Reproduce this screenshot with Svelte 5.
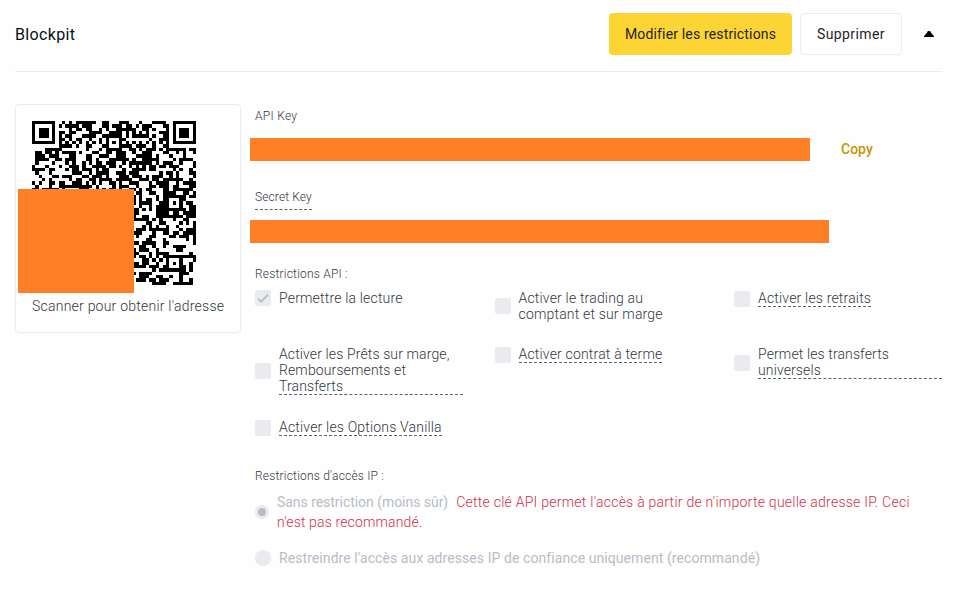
<script>
  const size = 49;
  const centers = [6, 24, 42];

  // Concentric square used by both finder and alignment patterns.
  function ring(x, y, cx, cy, radius) {
    const d = Math.max(Math.abs(x - cx), Math.abs(y - cy));
    if (d > radius) return null;
    if (radius === 4) return d !== 4 && d !== 2;
    return d !== 1;
  }

  function buildCode() {
    let seed = 73421;
    let path = '';
    for (let y = 0; y < size; y++) {
      for (let x = 0; x < size; x++) {
        seed = (seed * 48271) % 2147483647;
        let dark = seed / 2147483647 < 0.54;
        if (x === 6 || y === 6) dark = (x + y) % 2 === 0;
        for (const cx of centers) {
          for (const cy of centers) {
            const v = ring(x, y, cx, cy, 2);
            if (v !== null) dark = v;
          }
        }
        for (const [cx, cy] of [[3, 3], [45, 3], [3, 45]]) {
          const v = ring(x, y, cx, cy, 4);
          if (v !== null) dark = v;
        }
        if (dark) path += `M${x} ${y}h1v1h-1z`;
      }
    }
    return path;
  }

  const code = buildCode();

  const permissions = [
    { lines: ['Permettre la lecture'], checked: true },
    { lines: ['Activer le trading au', 'comptant et sur marge'] },
    { lines: ['Activer les retraits'], hint: true },
    { lines: ['Activer les Prêts sur marge,', 'Remboursements et', 'Transferts'], hint: true, full: true },
    { lines: ['Activer contrat à terme'], hint: true },
    { lines: ['Permet les transferts', 'universels'], hint: true, full: true },
    { lines: ['Activer les Options Vanilla'], hint: true }
  ];
</script>

<main>
  <header>
    <h1>Blockpit</h1>
    <div class="actions">
      <button class="primary">Modifier les restrictions</button>
      <button class="secondary">Supprimer</button>
      <svg class="caret" width="10" height="8" viewBox="0 0 10 8"><path d="M0 6.2 4.1 1.2Q5 .3 5.9 1.2L10 6.2V7H0z" /></svg>
    </div>
  </header>

  <div class="body">
    <aside>
      <div class="qr">
        <svg width="164" height="164" viewBox="0 0 49 49"><path d={code} /></svg>
        <div class="cover"></div>
      </div>
      <p>Scanner pour obtenir l'adresse</p>
    </aside>

    <section>
      <div class="label api">API Key</div>
      <div class="keyrow">
        <div class="key public"></div>
        <span class="copy">Copy</span>
      </div>
      <div class="label secret"><span>Secret Key</span></div>
      <div class="key private"></div>

      <div class="label restr">Restrictions API :</div>
      <div class="grid">
        {#each permissions as p}
          <div class="item">
            <span class="box">
              {#if p.checked}
                <svg width="16" height="16" viewBox="0 0 16 16"><path d="M3 8.6 6.1 11.6 13 4.6" /></svg>
              {/if}
            </span>
            <span class="text" class:hint={p.hint} class:full={p.full}>
              {#each p.lines as line}<span class="line">{line}</span>{/each}
            </span>
          </div>
        {/each}
      </div>

      <div class="label ip">Restrictions d'accès IP :</div>
      <div class="option first">
        <span class="radio on"></span>
        <div>
          <span class="muted">Sans restriction (moins sûr)</span><span class="warn">Cette clé API permet l'accès à partir de n'importe quelle adresse IP. Ceci</span>
          <br /><span class="warn end">n'est pas recommandé.</span>
        </div>
      </div>
      <div class="option second">
        <span class="radio"></span>
        <span>Restreindre l'accès aux adresses IP de confiance uniquement (recommandé)</span>
      </div>
    </section>
  </div>
</main>

<style>
  :global(body) { background: #fefefe; }
  main {
    box-sizing: border-box;
    width: 956px;
    height: 596px;
    padding: 0 14px 0 15px;
    overflow: hidden;
    font-family: Roboto, "Liberation Sans", sans-serif;
    font-size: 14px;
    font-weight: 300;
    color: #33383f;
    white-space: nowrap;
  }
  header {
    display: flex;
    align-items: center;
    justify-content: space-between;
    box-sizing: border-box;
    height: 72px;
    padding-bottom: 3px;
    border-bottom: 1px solid #eaecef;
  }
  h1 { margin: 0; font-size: 16px; font-weight: 400; color: #0b0e11; letter-spacing: 0.35px; }
  .actions { display: flex; align-items: center; }
  button {
    box-sizing: border-box;
    height: 42px;
    padding: 0;
    border: 0;
    border-radius: 4px;
    font: 400 14px Roboto, "Liberation Sans", sans-serif;
    color: #1e2329;
  }
  .primary { width: 183px; background: #fcd535; letter-spacing: 0.16px; }
  .secondary { width: 102px; margin-left: 8px; border: 1px solid #eaecef; background: #fff; letter-spacing: 0.4px; }
  .caret { margin: 0 8px 0 22px; fill: #000; }
  .body { display: flex; align-items: flex-start; padding-top: 32px; }
  aside {
    box-sizing: border-box;
    width: 226px;
    height: 229px;
    padding: 16px;
    border: 1px solid #eaecef;
    border-radius: 4px;
  }
  .qr { position: relative; width: 164px; height: 164px; }
  .qr svg { display: block; shape-rendering: crispEdges; }
  .cover { position: absolute; left: -14px; top: 68px; width: 116px; height: 104px; background: #ff7f27; }
  aside p { margin: 13px 0 0; line-height: 16px; letter-spacing: 0.23px; }
  section { width: 687px; margin-left: 14px; }
  .label { font-size: 12px; line-height: 16px; letter-spacing: 0.2px; }
  .api { margin-top: 4px; letter-spacing: 0.3px; }
  .keyrow { display: flex; align-items: center; height: 23px; margin-top: 14px; }
  .key { height: 23px; margin-left: -5px; background: #ff7f27; }
  .public { width: 560px; }
  .private { width: 579px; margin-top: 10px; }
  .copy { margin: -1px 0 0 31px; font-weight: 500; color: #c99400; }
  .secret { margin-top: 28px; letter-spacing: 0.12px; }
  .secret span { display: inline-block; height: 20px; border-bottom: 1px dashed #5e636b; }
  .restr { margin-top: 23px; }
  .grid {
    display: grid;
    grid-template-columns: repeat(3, 208px);
    column-gap: 31.5px;
    row-gap: 24px;
    align-items: start;
    margin-top: 8px;
  }
  .item { display: flex; align-items: center; }
  .box { flex: none; width: 16px; height: 16px; margin-right: 8px; border-radius: 2px; background: #eaebef; }
  .box svg { display: block; fill: none; stroke: #b7bdc6; stroke-width: 2; }
  .text { line-height: 16px; letter-spacing: 0.18px; }
  .line { display: block; }
  .hint { border-bottom: 1px dashed #5e636b; }
  .full { width: 184px; }
  .full .line { letter-spacing: 0.12px; }
  .ip { margin-top: 32px; }
  .option { display: flex; align-items: center; }
  .first { margin-top: 8px; line-height: 20px; }
  .second { margin-top: 18px; line-height: 16px; height: 16px; color: #b7bdc6; font-weight: 400; letter-spacing: 0.075px; }
  .radio { flex: none; box-sizing: border-box; width: 16px; height: 16px; margin-right: 8px; border-radius: 50%; background: #eaebef; }
  .on { width: 14px; height: 14px; border: 3px solid #eaebef; background: #b7bdc6; }
  .muted { margin-right: 8px; color: #b7bdc6; font-weight: 400; letter-spacing: -0.04px; }
  .warn { color: #cf304a; letter-spacing: 0.25px; }
  .end { letter-spacing: 0.15px; }
</style>
